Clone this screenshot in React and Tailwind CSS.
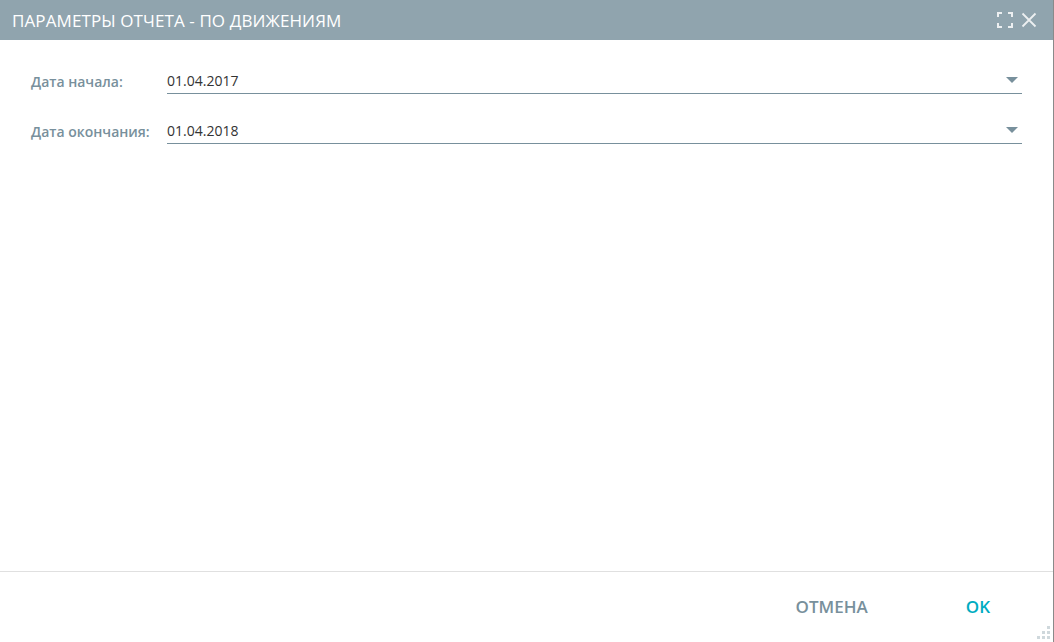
const ExpandIcon = () => (
  <svg width="16" height="16" viewBox="0 0 16 16" fill="none" stroke="#eceff1" strokeWidth="2">
    <path d="M1 5V1h4M11 1h4v4M15 11v4h-4M5 15H1v-4" />
  </svg>
);

const CloseIcon = () => (
  <svg width="16" height="16" viewBox="0 0 16 16" fill="none" stroke="#eceff1" strokeWidth="1.8">
    <path d="M1.5 1.5l13 13M14.5 1.5l-13 13" />
  </svg>
);

const Caret = () => (
  <svg width="12" height="7" viewBox="0 0 12 7" className="shrink-0">
    <path d="M0 0h12L6 6z" fill="#78909c" />
  </svg>
);

const Field = ({ label, value }) => (
  <div className="flex items-center h-[50px]">
    <div className="w-[136px] text-[14px] font-semibold text-[#78909c]">{label}</div>
    <div className="flex-1 flex items-center justify-between h-[26px] border-b border-[#78909c] pr-[4px]">
      <span className="text-[14px] text-[#333]">{value}</span>
      <Caret />
    </div>
  </div>
);

export default function App() {
  return (
    <div className="w-[1054px] h-[642px] bg-white flex flex-col border-r border-[#8a8a8a] overflow-hidden relative" style={{ fontFamily: '"Open Sans", "Noto Sans", sans-serif' }}>
      <div className="h-[40px] bg-[#90a4ae] flex items-center justify-between pl-[12px] pr-[16px] shrink-0">
        <div className="text-white text-[17px] tracking-[0.1px] pt-[2px]">ПАРАМЕТРЫ ОТЧЕТА - ПО ДВИЖЕНИЯМ</div>
        <div className="flex items-center gap-[8px]">
          <ExpandIcon />
          <CloseIcon />
        </div>
      </div>

      <div className="flex-1 pl-[31px] pr-[31px] pt-[16px]">
        <Field label="Дата начала:" value="01.04.2017" />
        <Field label="Дата окончания:" value="01.04.2018" />
      </div>

      <div className="h-[71px] border-t border-[#e0e0e0] flex items-center justify-end pr-[63px] shrink-0">
        <button className="text-[17px] font-semibold text-[#78909c] mr-[98px]">ОТМЕНА</button>
        <button className="text-[17px] font-semibold text-[#00acc1]">OK</button>
      </div>

      <div className="absolute right-[3px] bottom-[3px] grid grid-cols-3 gap-[2px]">
        <span className="w-[3px] h-[3px]" />
        <span className="w-[3px] h-[3px]" />
        <span className="w-[3px] h-[3px] bg-[#cfd8dc]" />
        <span className="w-[3px] h-[3px]" />
        <span className="w-[3px] h-[3px] bg-[#cfd8dc]" />
        <span className="w-[3px] h-[3px] bg-[#cfd8dc]" />
        <span className="w-[3px] h-[3px] bg-[#cfd8dc]" />
        <span className="w-[3px] h-[3px] bg-[#cfd8dc]" />
        <span className="w-[3px] h-[3px] bg-[#cfd8dc]" />
      </div>
    </div>
  );
}
